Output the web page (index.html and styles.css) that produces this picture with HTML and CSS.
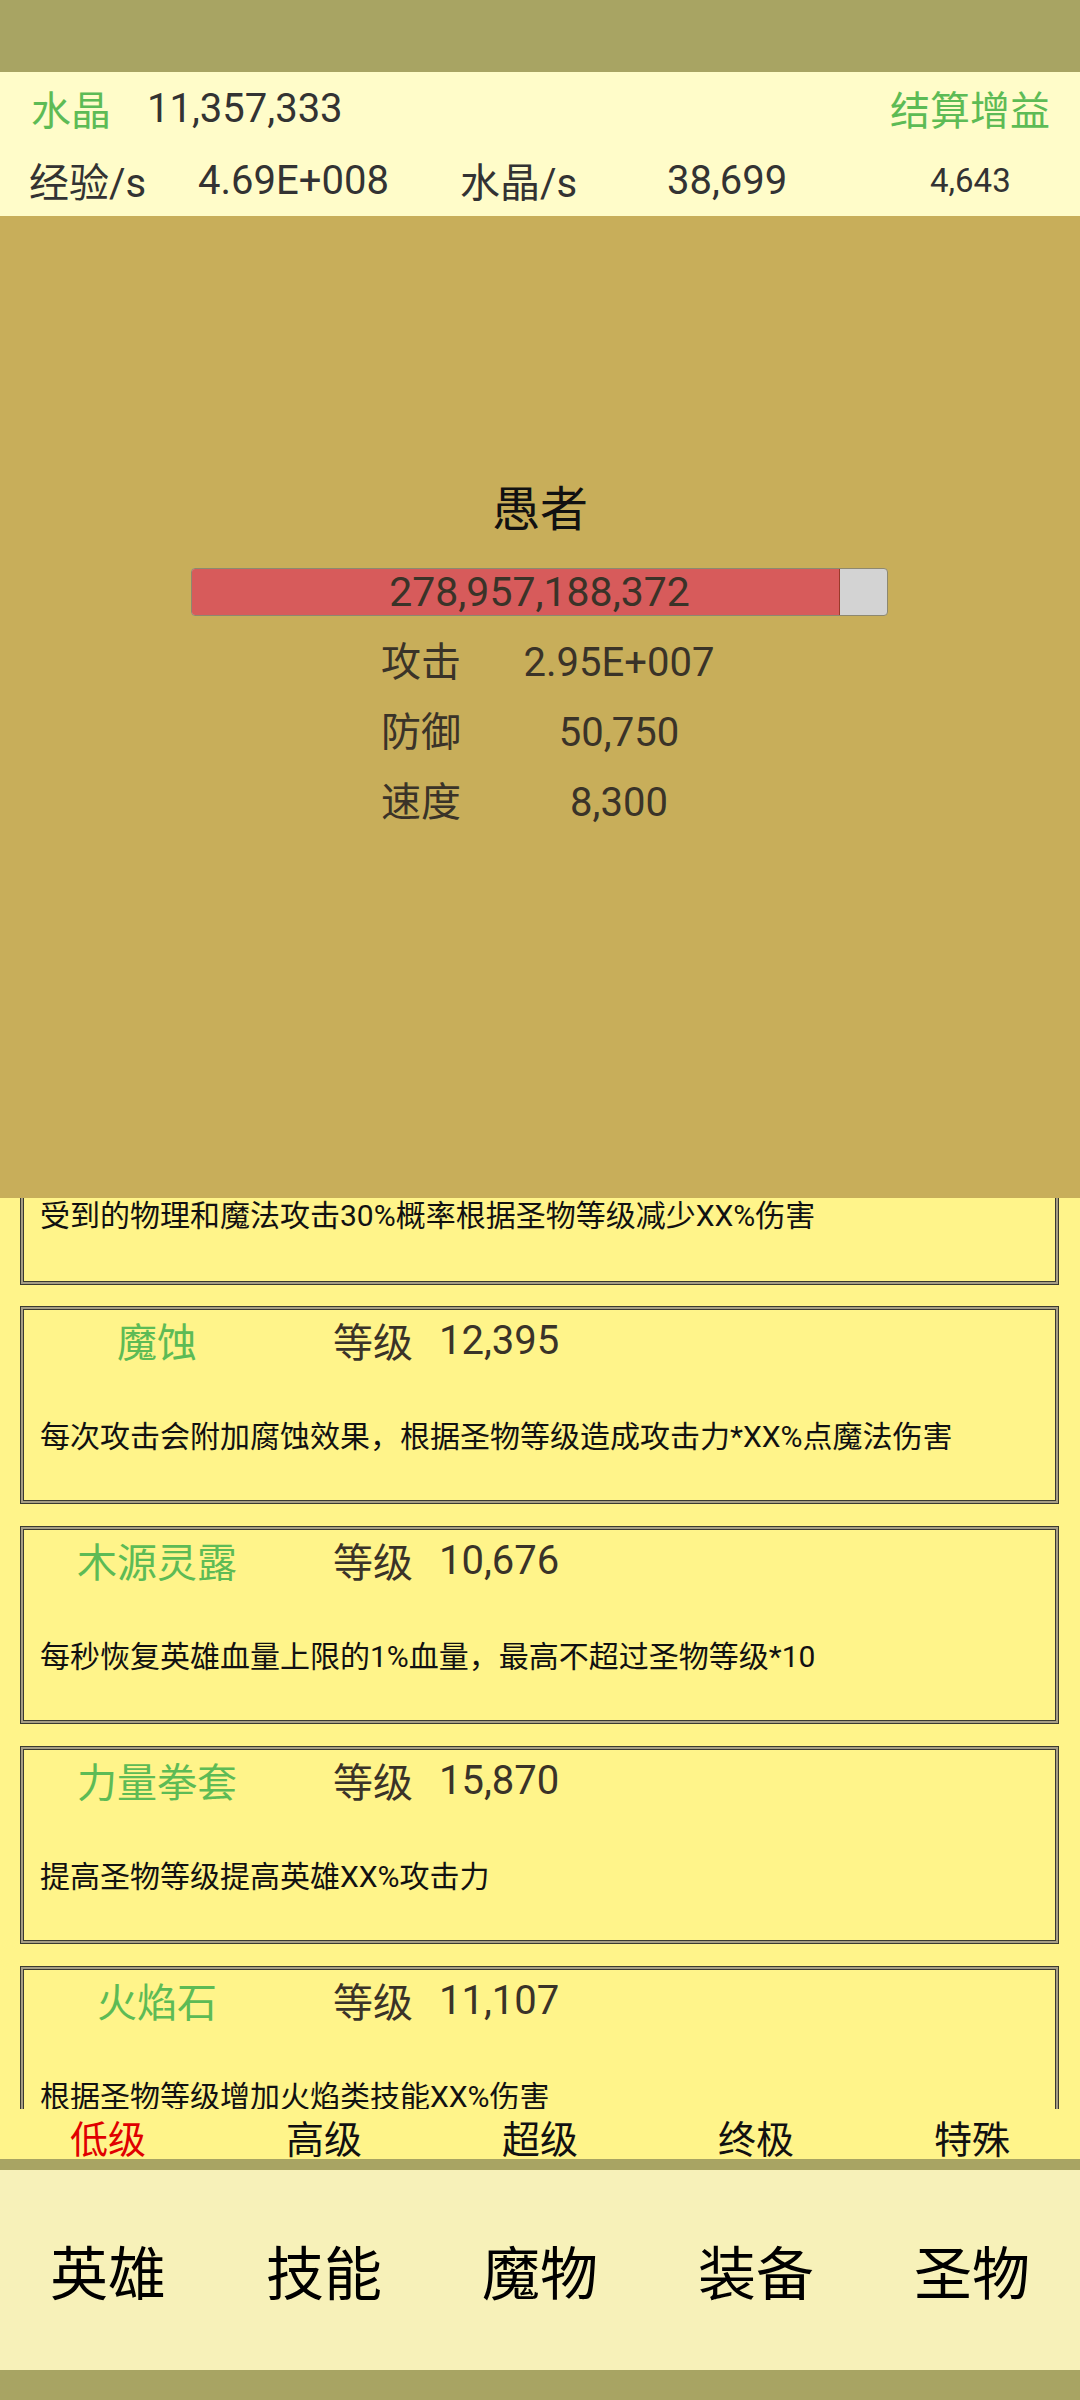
FILE: index.html
```html
<!DOCTYPE html>
<html lang="zh-CN">
<head>
    <meta charset="UTF-8">
    <meta name="viewport" content="width=device-width, initial-scale=1.0">
    <title>圣物</title>
    <link rel="stylesheet" href="styles.css">
</head>
<body>
    <div class="status-bar"></div>

    <!-- Resources -->
    <div class="header">
        <div class="row row-top">
            <span class="green">水晶</span>
            <span class="crystal">11,357,333</span>
            <span class="green settle">结算增益</span>
        </div>
        <div class="row row-rates">
            <span>经验/s</span>
            <span>4.69E+008</span>
            <span>水晶/s</span>
            <span>38,699</span>
            <span class="small">4,643</span>
        </div>
    </div>

    <!-- Monster -->
    <div class="monster">
        <div class="monster-name">愚者</div>
        <div class="hp-bar">
            <div class="hp-fill"></div>
            <div class="hp-text">278,957,188,372</div>
        </div>
        <div class="stats">
            <span>攻击</span><span class="val">2.95E+007</span>
            <span>防御</span><span class="val">50,750</span>
            <span>速度</span><span class="val">8,300</span>
        </div>
    </div>

    <!-- Relic list (scrolled, first card partly hidden) -->
    <div class="list">
        <div class="list-inner">
            <div class="card partial">
                <div class="card-desc">受到的物理和魔法攻击30%概率根据圣物等级减少XX%伤害</div>
            </div>
            <div class="card">
                <div class="card-head">
                    <span class="card-title">魔蚀</span>
                    <span class="lv-label">等级</span>
                    <span class="lv">12,395</span>
                </div>
                <div class="card-desc">每次攻击会附加腐蚀效果，根据圣物等级造成攻击力*XX%点魔法伤害</div>
            </div>
            <div class="card">
                <div class="card-head">
                    <span class="card-title">木源灵露</span>
                    <span class="lv-label">等级</span>
                    <span class="lv">10,676</span>
                </div>
                <div class="card-desc">每秒恢复英雄血量上限的1%血量，最高不超过圣物等级*10</div>
            </div>
            <div class="card">
                <div class="card-head">
                    <span class="card-title">力量拳套</span>
                    <span class="lv-label">等级</span>
                    <span class="lv">15,870</span>
                </div>
                <div class="card-desc">提高圣物等级提高英雄XX%攻击力</div>
            </div>
            <div class="card">
                <div class="card-head">
                    <span class="card-title">火焰石</span>
                    <span class="lv-label">等级</span>
                    <span class="lv">11,107</span>
                </div>
                <div class="card-desc">根据圣物等级增加火焰类技能XX%伤害</div>
            </div>
        </div>
    </div>

    <!-- Grade tabs -->
    <div class="tabs">
        <span class="active">低级</span>
        <span>高级</span>
        <span>超级</span>
        <span>终极</span>
        <span>特殊</span>
    </div>

    <div class="nav">
        <span>英雄</span>
        <span>技能</span>
        <span>魔物</span>
        <span>装备</span>
        <span>圣物</span>
    </div>
    <div class="bottom-bar"></div>
</body>
</html>
```

FILE: styles.css
```css
body {
    margin: 0;
    font-family: Roboto, "Noto Sans CJK SC", sans-serif;
    color: #333;
    background-color: #a8a463;
}
.status-bar {
    height: 72px;
    background-color: #a8a463;
}
.header {
    height: 144px;
    background-color: #fffcc9;
    font-size: 40px;
}
.row {
    height: 72px;
    display: flex;
    align-items: center;
}
.row-top {
    padding: 0 30px 0 31px;
}
.green {
    color: #5dbb55;
}
.crystal {
    margin-left: 36px;
}
.settle {
    margin-left: auto;
}
.row-rates {
    display: grid;
    grid-template-columns: 169px 262px 207px 263px 1fr;
    padding-left: 29px;
}
.small {
    font-size: 33px;
}
.monster {
    height: 982px;
    background-color: #c8ae5a;
    padding-top: 264px;
    box-sizing: border-box;
}
.monster-name {
    text-align: center;
    font-size: 48px;
    line-height: 60px;
    color: #111;
}
.hp-bar {
    position: relative;
    width: 697px;
    height: 48px;
    margin: 28px 0 0 191px;
    box-sizing: border-box;
    background-color: #d3d3d3;
    border: 1px solid #8d8870;
    border-radius: 4px;
    overflow: hidden;
}
.hp-fill {
    width: 648px;
    height: 100%;
    background-color: #d75b5b;
    border-right: 1px solid #9a3a2a;
    box-sizing: border-box;
}
.hp-text {
    position: absolute;
    inset: 0;
    text-align: center;
    font-size: 41px;
    line-height: 46px;
    color: #3a3328;
}
.stats {
    display: grid;
    grid-template-columns: 100px 276px;
    margin: 12px 0 0 381px;
    font-size: 40px;
    line-height: 70px;
    color: #3a3328;
}
.stats .val {
    text-align: center;
}
.list {
    height: 911px;
    overflow: hidden;
    background-color: #fff48a;
}
.list-inner {
    padding: 0 21px 0 20px;
}
.card {
    height: 198px;
    margin-bottom: 22px;
    box-sizing: border-box;
    border: 1px solid #3a3a30;
    box-shadow: inset 0 0 0 2px #a59d84, inset 0 0 0 3px #3a3a30;
    padding: 3px 0 0 19px;
}
.card.partial {
    height: 87px;
    margin-bottom: 21px;
    padding-top: 0;
    border-top: none;
    box-shadow: inset 2px 0 #a59d84, inset -2px 0 #a59d84, inset 0 -2px #a59d84,
        inset 3px 0 #3a3a30, inset -3px 0 #3a3a30, inset 0 -3px #3a3a30;
}
.card.partial .card-desc {
    margin-top: 0;
    line-height: 36px;
}
.card-head {
    display: flex;
    height: 60px;
    align-items: center;
    font-size: 40px;
}
.card-title {
    width: 272px;
    margin-left: -19px;
    text-align: center;
    color: #5dbb55;
}
.lv-label {
    margin-left: 40px;
    color: #3a3328;
}
.lv {
    margin-left: 26px;
    color: #3a3328;
}
.card-desc {
    margin-top: 47px;
    font-size: 30px;
    line-height: 40px;
    color: #111;
}
.tabs {
    height: 50px;
    display: grid;
    grid-template-columns: repeat(5, 1fr);
    align-items: center;
    text-align: center;
    background-color: #fff48a;
    font-size: 38px;
    color: #111;
    border-bottom: 11px solid #a8a463;
}
.tabs .active {
    color: #e00000;
}
.nav {
    height: 200px;
    display: grid;
    grid-template-columns: repeat(5, 1fr);
    align-items: center;
    text-align: center;
    background-color: #f7f1b9;
    font-size: 58px;
    color: #000;
}
.bottom-bar {
    height: 30px;
    background-color: #a8a463;
}
```
